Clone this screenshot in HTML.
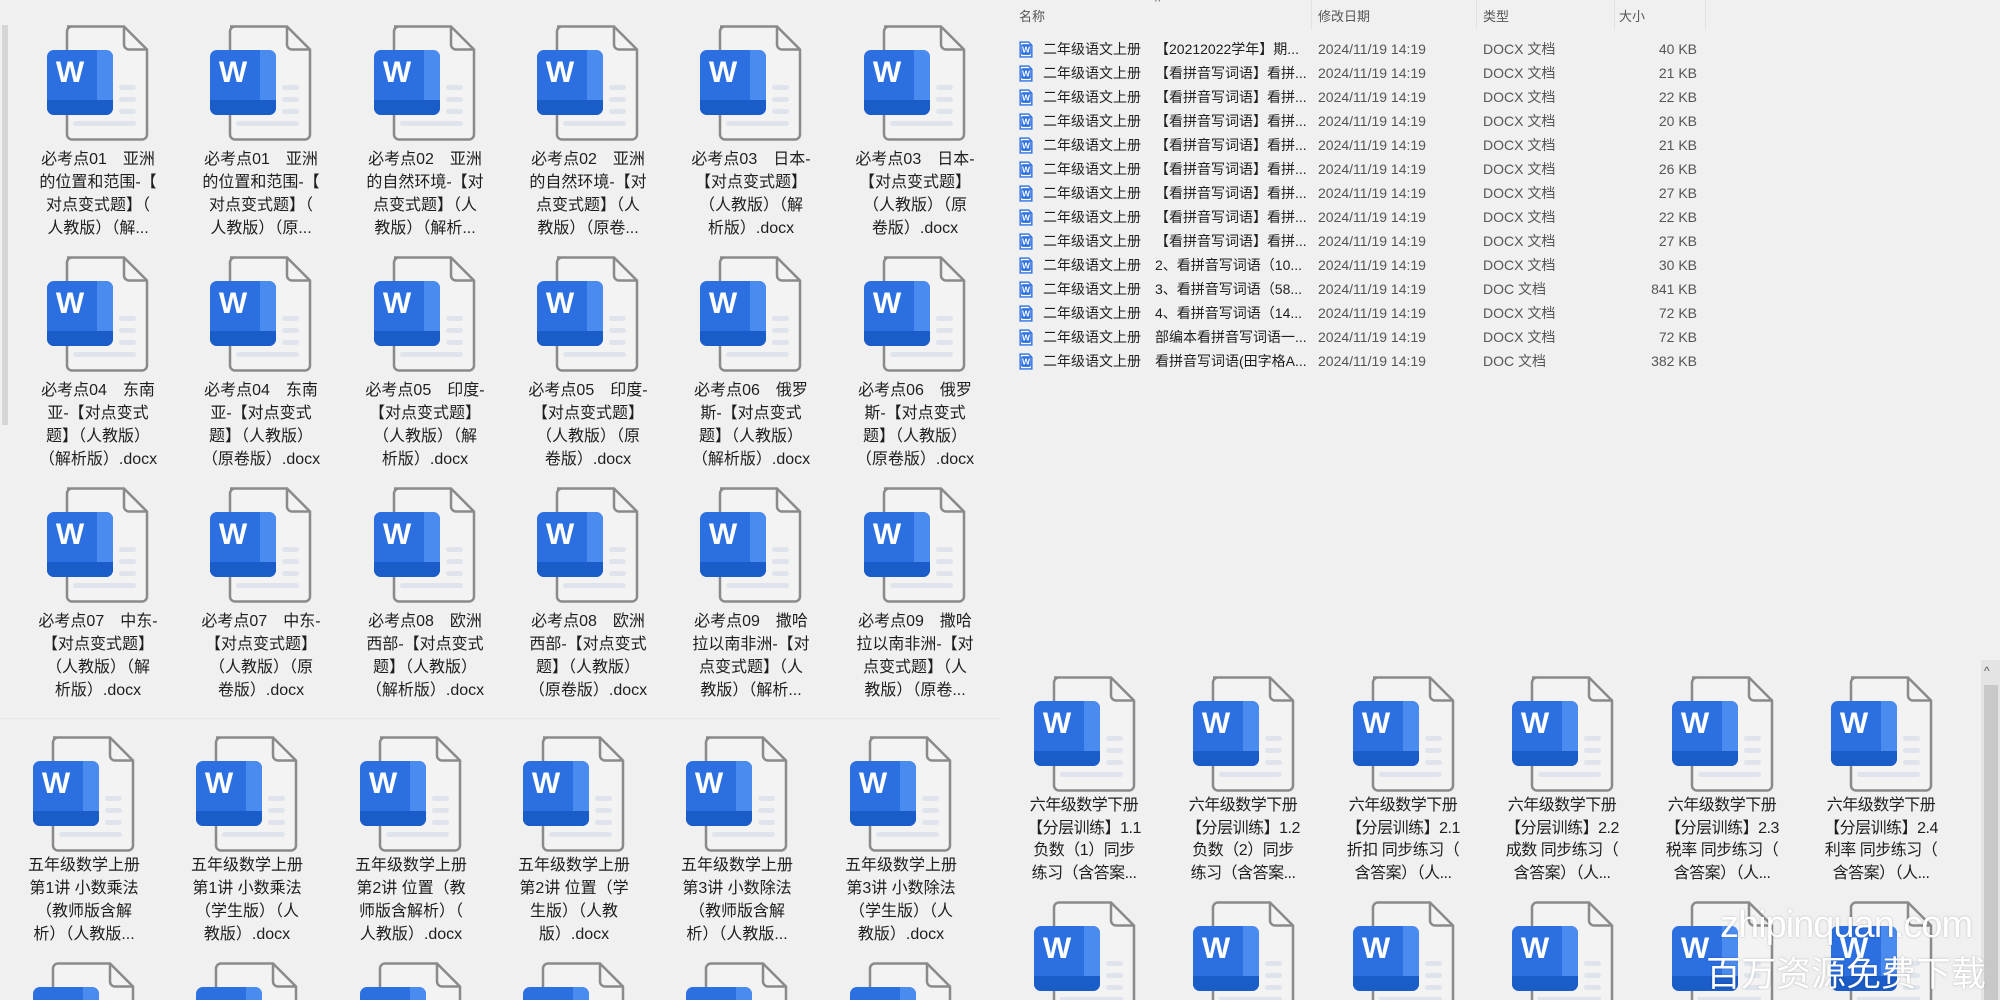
<!DOCTYPE html>
<html style="width:2000px;height:1000px;overflow:hidden"><head><meta charset="utf-8">
<style>
*{margin:0;padding:0;box-sizing:border-box}
body{width:2000px;height:1000px;overflow:hidden;background:#f0f0f0;position:relative;font-family:"Liberation Sans","Noto Sans CJK SC",sans-serif;color:#1e1e1e}
#root{position:absolute;left:0;top:0;width:2000px;height:1000px;overflow:hidden}
.t{position:absolute;width:160px;text-align:center;font-size:16px;line-height:23px;white-space:nowrap}
.t2{font-size:16px;line-height:22.5px;letter-spacing:-0.5px}
.row{position:absolute;left:1019px;height:24px;font-size:14px;line-height:24px;white-space:nowrap;width:700px}
.row span{position:absolute;top:0}
.hd{position:absolute;top:6px;font-size:13px;color:#555}
.dv{position:absolute;top:0;width:1px;height:30px;background:#e2e2e2}
</style></head><body><div id="root">
<svg width="0" height="0" style="position:absolute">
<defs>
<symbol id="w" viewBox="0 0 102 116">
<path d="M20 1.5h57l23 23v85a5 5 0 0 1-5 5H25a5 5 0 0 1-5-5V6.5a5 5 0 0 1 5-5z" fill="#f3f3f3" stroke="#8a8a8a" stroke-width="2.5"/>
<path d="M77 1.5v18a5 5 0 0 0 5 5h18" fill="none" stroke="#8a8a8a" stroke-width="2.5"/>
<rect x="72" y="60" width="17" height="5" rx="2.5" fill="#dfe4ec"/>
<rect x="72" y="72" width="17" height="5" rx="2.5" fill="#dfe4ec"/>
<rect x="72" y="84" width="17" height="5" rx="2.5" fill="#dfe4ec"/>
<rect x="26" y="96" width="63" height="5" rx="2.5" fill="#dfe4ec"/>
<rect x="0" y="25" width="66" height="65" rx="7" fill="#2b6fe0"/>
<path d="M50 25h9a7 7 0 0 1 7 7v51a7 7 0 0 1-7 7h-9z" fill="#4a8bef"/>
<path d="M0 75h66v8a7 7 0 0 1-7 7H7a7 7 0 0 1-7-7z" fill="#1a5cc8"/>
<text x="23" y="57" font-family="Liberation Sans" font-weight="bold" font-size="30" fill="#fff" text-anchor="middle">W</text>
</symbol>
<symbol id="wb" viewBox="0 0 102 99">
<path d="M20 99V6.5a5 5 0 0 1 5-5h52l23 23V99" fill="#f3f3f3" stroke="#8a8a8a" stroke-width="2.5"/>
<path d="M77 1.5v18a5 5 0 0 0 5 5h18" fill="none" stroke="#8a8a8a" stroke-width="2.5"/>
<rect x="72" y="60" width="17" height="5" rx="2.5" fill="#dfe4ec"/>
<rect x="72" y="72" width="17" height="5" rx="2.5" fill="#dfe4ec"/>
<rect x="72" y="84" width="17" height="5" rx="2.5" fill="#dfe4ec"/>
<rect x="26" y="96" width="63" height="3" fill="#dfe4ec"/>
<rect x="0" y="25" width="66" height="65" rx="7" fill="#2b6fe0"/>
<path d="M50 25h9a7 7 0 0 1 7 7v51a7 7 0 0 1-7 7h-9z" fill="#4a8bef"/>
<path d="M0 75h66v8a7 7 0 0 1-7 7H7a7 7 0 0 1-7-7z" fill="#1a5cc8"/>
<text x="23" y="57" font-family="Liberation Sans" font-weight="bold" font-size="30" fill="#fff" text-anchor="middle">W</text>
</symbol>
<symbol id="wa" viewBox="0 0 102 38">
<path d="M20 38V6.5a5 5 0 0 1 5-5h52l23 23V38" fill="#f3f3f3" stroke="#8a8a8a" stroke-width="2.5"/>
<path d="M77 1.5v18a5 5 0 0 0 5 5h18" fill="none" stroke="#8a8a8a" stroke-width="2.5"/>
<path d="M0 38V32a7 7 0 0 1 7-7h52a7 7 0 0 1 7 7v6z" fill="#2b6fe0"/>
<path d="M50 25h9a7 7 0 0 1 7 7v6h-16z" fill="#4a8bef"/>
</symbol>
<symbol id="sw" viewBox="0 0 13 16"><path d="M1 1h8l3 3v11H1z" fill="#fff" stroke="#2b6fe0" stroke-width="1.3"/><rect x="2" y="3" width="9" height="10" rx="1" fill="#2b6fe0"/><text x="6.5" y="11" font-size="8" font-weight="bold" fill="#fff" text-anchor="middle" font-family="Liberation Sans">W</text></symbol>
</defs></svg>

<div style="position:absolute;left:2px;top:25px;width:6px;height:400px;background:#d6d6d6"></div>
<div style="position:absolute;left:0;top:718px;width:1000px;height:1px;background:#e6e6e6"></div>

<svg style="position:absolute;left:47px;top:25px" width="102" height="116"><use href="#w"/></svg>
<svg style="position:absolute;left:210px;top:25px" width="102" height="116"><use href="#w"/></svg>
<svg style="position:absolute;left:374px;top:25px" width="102" height="116"><use href="#w"/></svg>
<svg style="position:absolute;left:537px;top:25px" width="102" height="116"><use href="#w"/></svg>
<svg style="position:absolute;left:700px;top:25px" width="102" height="116"><use href="#w"/></svg>
<svg style="position:absolute;left:864px;top:25px" width="102" height="116"><use href="#w"/></svg>
<div class="t" style="left:18px;top:148px">必考点01　亚洲<br>的位置和范围-【<br>对点变式题】（<br>人教版）（解...</div>
<div class="t" style="left:181px;top:148px">必考点01　亚洲<br>的位置和范围-【<br>对点变式题】（<br>人教版）（原...</div>
<div class="t" style="left:345px;top:148px">必考点02　亚洲<br>的自然环境-【对<br>点变式题】（人<br>教版）（解析...</div>
<div class="t" style="left:508px;top:148px">必考点02　亚洲<br>的自然环境-【对<br>点变式题】（人<br>教版）（原卷...</div>
<div class="t" style="left:671px;top:148px">必考点03　日本-<br>【对点变式题】<br>（人教版）（解<br>析版）.docx</div>
<div class="t" style="left:835px;top:148px">必考点03　日本-<br>【对点变式题】<br>（人教版）（原<br>卷版）.docx</div>

<svg style="position:absolute;left:47px;top:256px" width="102" height="116"><use href="#w"/></svg>
<svg style="position:absolute;left:210px;top:256px" width="102" height="116"><use href="#w"/></svg>
<svg style="position:absolute;left:374px;top:256px" width="102" height="116"><use href="#w"/></svg>
<svg style="position:absolute;left:537px;top:256px" width="102" height="116"><use href="#w"/></svg>
<svg style="position:absolute;left:700px;top:256px" width="102" height="116"><use href="#w"/></svg>
<svg style="position:absolute;left:864px;top:256px" width="102" height="116"><use href="#w"/></svg>
<div class="t" style="left:18px;top:379px">必考点04　东南<br>亚-【对点变式<br>题】（人教版）<br>（解析版）.docx</div>
<div class="t" style="left:181px;top:379px">必考点04　东南<br>亚-【对点变式<br>题】（人教版）<br>（原卷版）.docx</div>
<div class="t" style="left:345px;top:379px">必考点05　印度-<br>【对点变式题】<br>（人教版）（解<br>析版）.docx</div>
<div class="t" style="left:508px;top:379px">必考点05　印度-<br>【对点变式题】<br>（人教版）（原<br>卷版）.docx</div>
<div class="t" style="left:671px;top:379px">必考点06　俄罗<br>斯-【对点变式<br>题】（人教版）<br>（解析版）.docx</div>
<div class="t" style="left:835px;top:379px">必考点06　俄罗<br>斯-【对点变式<br>题】（人教版）<br>（原卷版）.docx</div>

<svg style="position:absolute;left:47px;top:487px" width="102" height="116"><use href="#w"/></svg>
<svg style="position:absolute;left:210px;top:487px" width="102" height="116"><use href="#w"/></svg>
<svg style="position:absolute;left:374px;top:487px" width="102" height="116"><use href="#w"/></svg>
<svg style="position:absolute;left:537px;top:487px" width="102" height="116"><use href="#w"/></svg>
<svg style="position:absolute;left:700px;top:487px" width="102" height="116"><use href="#w"/></svg>
<svg style="position:absolute;left:864px;top:487px" width="102" height="116"><use href="#w"/></svg>
<div class="t" style="left:18px;top:610px">必考点07　中东-<br>【对点变式题】<br>（人教版）（解<br>析版）.docx</div>
<div class="t" style="left:181px;top:610px">必考点07　中东-<br>【对点变式题】<br>（人教版）（原<br>卷版）.docx</div>
<div class="t" style="left:345px;top:610px">必考点08　欧洲<br>西部-【对点变式<br>题】（人教版）<br>（解析版）.docx</div>
<div class="t" style="left:508px;top:610px">必考点08　欧洲<br>西部-【对点变式<br>题】（人教版）<br>（原卷版）.docx</div>
<div class="t" style="left:671px;top:610px">必考点09　撒哈<br>拉以南非洲-【对<br>点变式题】（人<br>教版）（解析...</div>
<div class="t" style="left:835px;top:610px">必考点09　撒哈<br>拉以南非洲-【对<br>点变式题】（人<br>教版）（原卷...</div>

<svg style="position:absolute;left:33px;top:736px" width="102" height="116"><use href="#w"/></svg>
<svg style="position:absolute;left:196px;top:736px" width="102" height="116"><use href="#w"/></svg>
<svg style="position:absolute;left:360px;top:736px" width="102" height="116"><use href="#w"/></svg>
<svg style="position:absolute;left:523px;top:736px" width="102" height="116"><use href="#w"/></svg>
<svg style="position:absolute;left:686px;top:736px" width="102" height="116"><use href="#w"/></svg>
<svg style="position:absolute;left:850px;top:736px" width="102" height="116"><use href="#w"/></svg>
<div class="t" style="left:4px;top:854px">五年级数学上册<br>第1讲 小数乘法<br>（教师版含解<br>析）（人教版...</div>
<div class="t" style="left:167px;top:854px">五年级数学上册<br>第1讲 小数乘法<br>（学生版）（人<br>教版）.docx</div>
<div class="t" style="left:331px;top:854px">五年级数学上册<br>第2讲 位置（教<br>师版含解析）（<br>人教版）.docx</div>
<div class="t" style="left:494px;top:854px">五年级数学上册<br>第2讲 位置（学<br>生版）（人教<br>版）.docx</div>
<div class="t" style="left:657px;top:854px">五年级数学上册<br>第3讲 小数除法<br>（教师版含解<br>析）（人教版...</div>
<div class="t" style="left:821px;top:854px">五年级数学上册<br>第3讲 小数除法<br>（学生版）（人<br>教版）.docx</div>
<svg style="position:absolute;left:33px;top:962px" width="102" height="38"><use href="#wa"/></svg>
<svg style="position:absolute;left:196px;top:962px" width="102" height="38"><use href="#wa"/></svg>
<svg style="position:absolute;left:360px;top:962px" width="102" height="38"><use href="#wa"/></svg>
<svg style="position:absolute;left:523px;top:962px" width="102" height="38"><use href="#wa"/></svg>
<svg style="position:absolute;left:686px;top:962px" width="102" height="38"><use href="#wa"/></svg>
<svg style="position:absolute;left:850px;top:962px" width="102" height="38"><use href="#wa"/></svg>

<div class="hd" style="left:1019px">名称</div>
<div class="hd" style="left:1155px;top:-4px;font-size:11px">^</div>
<div class="hd" style="left:1318px">修改日期</div>
<div class="hd" style="left:1483px">类型</div>
<div class="hd" style="left:1619px">大小</div>
<div class="dv" style="left:1311px"></div>
<div class="dv" style="left:1476px"></div>
<div class="dv" style="left:1614px"></div>
<div class="dv" style="left:1705px"></div>

<div class="row" style="top:37px"><svg style="position:absolute;left:0;top:4px" width="14" height="17"><use href="#sw"/></svg><span style="left:24px">二年级语文上册</span><span style="left:136px">【20212022学年】期...</span><span style="left:299px;color:#555">2024/11/19 14:19</span><span style="left:464px;color:#555">DOCX 文档</span><span style="right:22px;color:#555">40 KB</span></div>
<div class="row" style="top:61px"><svg style="position:absolute;left:0;top:4px" width="14" height="17"><use href="#sw"/></svg><span style="left:24px">二年级语文上册</span><span style="left:136px">【看拼音写词语】看拼...</span><span style="left:299px;color:#555">2024/11/19 14:19</span><span style="left:464px;color:#555">DOCX 文档</span><span style="right:22px;color:#555">21 KB</span></div>
<div class="row" style="top:85px"><svg style="position:absolute;left:0;top:4px" width="14" height="17"><use href="#sw"/></svg><span style="left:24px">二年级语文上册</span><span style="left:136px">【看拼音写词语】看拼...</span><span style="left:299px;color:#555">2024/11/19 14:19</span><span style="left:464px;color:#555">DOCX 文档</span><span style="right:22px;color:#555">22 KB</span></div>
<div class="row" style="top:109px"><svg style="position:absolute;left:0;top:4px" width="14" height="17"><use href="#sw"/></svg><span style="left:24px">二年级语文上册</span><span style="left:136px">【看拼音写词语】看拼...</span><span style="left:299px;color:#555">2024/11/19 14:19</span><span style="left:464px;color:#555">DOCX 文档</span><span style="right:22px;color:#555">20 KB</span></div>
<div class="row" style="top:133px"><svg style="position:absolute;left:0;top:4px" width="14" height="17"><use href="#sw"/></svg><span style="left:24px">二年级语文上册</span><span style="left:136px">【看拼音写词语】看拼...</span><span style="left:299px;color:#555">2024/11/19 14:19</span><span style="left:464px;color:#555">DOCX 文档</span><span style="right:22px;color:#555">21 KB</span></div>
<div class="row" style="top:157px"><svg style="position:absolute;left:0;top:4px" width="14" height="17"><use href="#sw"/></svg><span style="left:24px">二年级语文上册</span><span style="left:136px">【看拼音写词语】看拼...</span><span style="left:299px;color:#555">2024/11/19 14:19</span><span style="left:464px;color:#555">DOCX 文档</span><span style="right:22px;color:#555">26 KB</span></div>
<div class="row" style="top:181px"><svg style="position:absolute;left:0;top:4px" width="14" height="17"><use href="#sw"/></svg><span style="left:24px">二年级语文上册</span><span style="left:136px">【看拼音写词语】看拼...</span><span style="left:299px;color:#555">2024/11/19 14:19</span><span style="left:464px;color:#555">DOCX 文档</span><span style="right:22px;color:#555">27 KB</span></div>
<div class="row" style="top:205px"><svg style="position:absolute;left:0;top:4px" width="14" height="17"><use href="#sw"/></svg><span style="left:24px">二年级语文上册</span><span style="left:136px">【看拼音写词语】看拼...</span><span style="left:299px;color:#555">2024/11/19 14:19</span><span style="left:464px;color:#555">DOCX 文档</span><span style="right:22px;color:#555">22 KB</span></div>
<div class="row" style="top:229px"><svg style="position:absolute;left:0;top:4px" width="14" height="17"><use href="#sw"/></svg><span style="left:24px">二年级语文上册</span><span style="left:136px">【看拼音写词语】看拼...</span><span style="left:299px;color:#555">2024/11/19 14:19</span><span style="left:464px;color:#555">DOCX 文档</span><span style="right:22px;color:#555">27 KB</span></div>
<div class="row" style="top:253px"><svg style="position:absolute;left:0;top:4px" width="14" height="17"><use href="#sw"/></svg><span style="left:24px">二年级语文上册</span><span style="left:136px">2、看拼音写词语（10...</span><span style="left:299px;color:#555">2024/11/19 14:19</span><span style="left:464px;color:#555">DOCX 文档</span><span style="right:22px;color:#555">30 KB</span></div>
<div class="row" style="top:277px"><svg style="position:absolute;left:0;top:4px" width="14" height="17"><use href="#sw"/></svg><span style="left:24px">二年级语文上册</span><span style="left:136px">3、看拼音写词语（58...</span><span style="left:299px;color:#555">2024/11/19 14:19</span><span style="left:464px;color:#555">DOC 文档</span><span style="right:22px;color:#555">841 KB</span></div>
<div class="row" style="top:301px"><svg style="position:absolute;left:0;top:4px" width="14" height="17"><use href="#sw"/></svg><span style="left:24px">二年级语文上册</span><span style="left:136px">4、看拼音写词语（14...</span><span style="left:299px;color:#555">2024/11/19 14:19</span><span style="left:464px;color:#555">DOCX 文档</span><span style="right:22px;color:#555">72 KB</span></div>
<div class="row" style="top:325px"><svg style="position:absolute;left:0;top:4px" width="14" height="17"><use href="#sw"/></svg><span style="left:24px">二年级语文上册</span><span style="left:136px">部编本看拼音写词语一...</span><span style="left:299px;color:#555">2024/11/19 14:19</span><span style="left:464px;color:#555">DOCX 文档</span><span style="right:22px;color:#555">72 KB</span></div>
<div class="row" style="top:349px"><svg style="position:absolute;left:0;top:4px" width="14" height="17"><use href="#sw"/></svg><span style="left:24px">二年级语文上册</span><span style="left:136px">看拼音写词语(田字格A...</span><span style="left:299px;color:#555">2024/11/19 14:19</span><span style="left:464px;color:#555">DOC 文档</span><span style="right:22px;color:#555">382 KB</span></div>

<div style="position:absolute;left:1981px;top:660px;width:19px;height:340px;background:#e4e4e4"></div>
<div style="position:absolute;left:1984px;top:664px;font-size:12px;color:#555">^</div>
<div style="position:absolute;left:1984px;top:685px;width:14px;height:315px;background:#c8c8c8"></div>

<svg style="position:absolute;left:1034px;top:676px" width="102" height="116"><use href="#w"/></svg>
<svg style="position:absolute;left:1193px;top:676px" width="102" height="116"><use href="#w"/></svg>
<svg style="position:absolute;left:1353px;top:676px" width="102" height="116"><use href="#w"/></svg>
<svg style="position:absolute;left:1512px;top:676px" width="102" height="116"><use href="#w"/></svg>
<svg style="position:absolute;left:1672px;top:676px" width="102" height="116"><use href="#w"/></svg>
<svg style="position:absolute;left:1831px;top:676px" width="102" height="116"><use href="#w"/></svg>
<div class="t t2" style="left:1004px;top:795px">六年级数学下册<br>【分层训练】1.1<br>负数（1）同步<br>练习（含答案...</div>
<div class="t t2" style="left:1163px;top:795px">六年级数学下册<br>【分层训练】1.2<br>负数（2）同步<br>练习（含答案...</div>
<div class="t t2" style="left:1323px;top:795px">六年级数学下册<br>【分层训练】2.1<br>折扣 同步练习（<br>含答案）（人...</div>
<div class="t t2" style="left:1482px;top:795px">六年级数学下册<br>【分层训练】2.2<br>成数 同步练习（<br>含答案）（人...</div>
<div class="t t2" style="left:1642px;top:795px">六年级数学下册<br>【分层训练】2.3<br>税率 同步练习（<br>含答案）（人...</div>
<div class="t t2" style="left:1801px;top:795px">六年级数学下册<br>【分层训练】2.4<br>利率 同步练习（<br>含答案）（人...</div>
<svg style="position:absolute;left:1034px;top:901px" width="102" height="99"><use href="#wb"/></svg>
<svg style="position:absolute;left:1193px;top:901px" width="102" height="99"><use href="#wb"/></svg>
<svg style="position:absolute;left:1353px;top:901px" width="102" height="99"><use href="#wb"/></svg>
<svg style="position:absolute;left:1512px;top:901px" width="102" height="99"><use href="#wb"/></svg>
<svg style="position:absolute;left:1672px;top:901px" width="102" height="99"><use href="#wb"/></svg>
<svg style="position:absolute;left:1831px;top:901px" width="102" height="99"><use href="#wb"/></svg>

<div style="position:absolute;left:1720px;top:902px;font-size:38px;line-height:46px;letter-spacing:-1px;color:#fff;text-shadow:0 0 2px rgba(0,0,0,.25);white-space:nowrap">zhipinquan.com</div>
<div style="position:absolute;left:1706px;top:952px;font-size:35px;line-height:46px;color:#fff;text-shadow:0 0 2px rgba(0,0,0,.25);white-space:nowrap">百万资源免费下载</div>
</div></body></html>
